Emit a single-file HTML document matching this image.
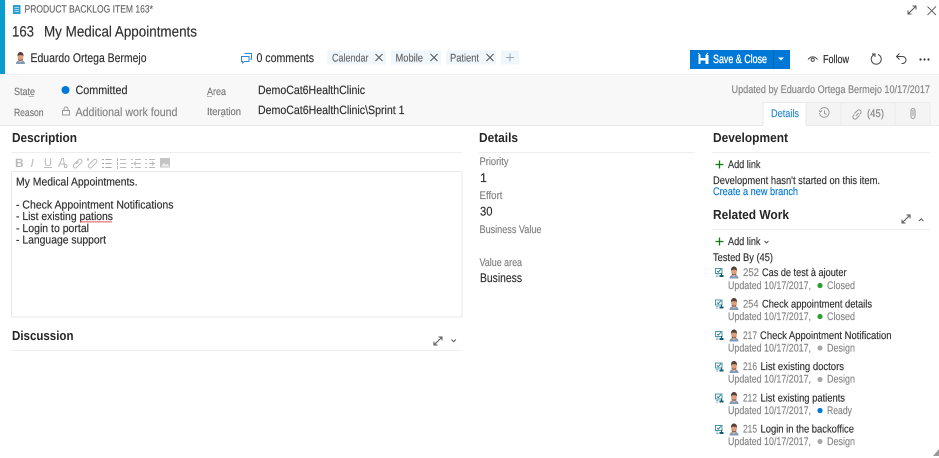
<!DOCTYPE html>
<html><head><meta charset="utf-8"><title>Product Backlog Item 163</title>
<style>
html,body{margin:0;padding:0;background:#fff;width:939px;height:458px;overflow:hidden}
svg{display:block;filter:blur(.3px)}
text{font-family:"Liberation Sans",sans-serif;color:#2e2e2e;fill:currentColor;stroke:currentColor;stroke-width:.16px;font-size:11.5px;text-rendering:geometricPrecision}
.s{font-size:11px}
.m{font-size:12px}
.l{color:#777;font-size:10.500px}
.f{color:#808080;font-size:11px}
.g{color:#858585;font-size:11px}
.t{color:#666;font-size:11px}
.h{font-size:13px;font-weight:bold;color:#262626;stroke-width:0}
.ic{fill:none;stroke:#666;stroke-width:1}
.tb{fill:none;stroke:#bcbcbc;stroke-width:1}
</style></head><body>
<svg width="939" height="458" viewBox="0 0 939 458" xmlns="http://www.w3.org/2000/svg">
<defs>
<g id="av"><path d="M1 12c0-2.600 1.500-3.800 4.500-3.800S10 9.400 10 12z" fill="#7f9bb8"/><path d="M4 8h3v1.500L5.500 10.500 4 9.500z" fill="#e8b89c"/><ellipse cx="5.500" cy="4.700" rx="2.900" ry="3.900" fill="#e09f7c"/><path d="M2.500 4.200C2.300 1.200 4 0 5.500 0S8.700 1.200 8.500 4.200C7.700 2.700 3.300 2.700 2.500 4.200z" fill="#55413a"/><path d="M3.200 6.300c.8 2 3.800 2 4.600 0v1.700c-.9 1-3.700 1-4.600 0z" fill="#8a5f4e"/></g>
<g id="tc"><path d="M.5.500h6.500v5H.5z" fill="none" stroke="#4a98a8"/><path d="M2 3l1.300 1.200L6 1.200" fill="none" stroke="#2f7f90"/><path d="M6 5v2h-1.500v2h4V7H7V5z" fill="#0f5f6f"/><path d="M1 7h2.500M1 8.500h2.500" stroke="#8fbac4"/></g>
<g id="ex" fill="none" stroke="#555" stroke-width="1"><path d="M1 9L9 1M5.500 1H9v3.500M1 5.500V9h3.500"/></g>
</defs>

<!-- header -->
<rect x="0" y="0" width="5" height="74" fill="#0a9ccc"/>
<rect x="13" y="5" width="7.500" height="9" fill="#2a9fd0"/><path d="M14.500 7.500h4.500M14.500 9.500h4.500M14.500 11.500h4.500" stroke="#cfe9f5" stroke-width=".8"/>
<text x="24.500" y="12.500" class="t" style="font-size:10.500px" textLength="128.500" lengthAdjust="spacingAndGlyphs">PRODUCT BACKLOG ITEM 163*</text>
<text x="12" y="36.500" style="font-size:15px" textLength="22" lengthAdjust="spacingAndGlyphs">163</text>
<text x="44" y="36.500" style="font-size:15px" textLength="153" lengthAdjust="spacingAndGlyphs">My Medical Appointments</text>
<g class="ic"><use href="#ex" x="907" y="5"/><path d="M927.500 6.500l8.500 8.500M936 6.500L927.500 15"/></g>

<use href="#av" x="15" y="52"/>
<text x="30.500" y="62" style="font-size:12.500px" textLength="116" lengthAdjust="spacingAndGlyphs">Eduardo Ortega Bermejo</text>
<g fill="none" stroke="#2b88d8"><path d="M244.500 53.500h7v5.500h-1.500"/><path d="M241.500 56.500h7.500v5h-4.500l-2 1.500v-1.500h-1z" fill="#fff"/></g>
<text x="256.500" y="62" style="font-size:12.500px" textLength="57.500" lengthAdjust="spacingAndGlyphs">0 comments</text>

<rect x="327" y="50.500" width="59" height="14" fill="#eff6fc"/>
<text x="332" y="61.500" class="t" textLength="36.500" lengthAdjust="spacingAndGlyphs">Calendar</text>
<path d="M375.500 54l7 7M382.500 54l-7 7" stroke="#555" fill="none"/>
<rect x="391" y="50.500" width="50" height="14" fill="#eff6fc"/>
<text x="395.500" y="61.500" class="t" textLength="27.500" lengthAdjust="spacingAndGlyphs">Mobile</text>
<path d="M430.500 54l7 7M437.500 54l-7 7" stroke="#555" fill="none"/>
<rect x="446" y="50.500" width="50" height="14" fill="#eff6fc"/>
<text x="450" y="61.500" class="t" textLength="29" lengthAdjust="spacingAndGlyphs">Patient</text>
<path d="M486.500 54l7 7M493.500 54l-7 7" stroke="#555" fill="none"/>
<rect x="501" y="50.500" width="18" height="14" fill="#eff6fc"/>
<path d="M506 57.500h8M510 53.500v8" stroke="#9aa7b3" fill="none"/>

<rect x="690" y="50" width="100" height="19" fill="#0078d7"/>
<rect x="773" y="50" width="1" height="19" fill="#0a5fa8"/>
<path d="M698.500 55h10v9h-10z" fill="#fff"/><path d="M700.500 55h5v3h-5z" fill="#0078d7"/><path d="M700.500 60.500h5v3.500h-5z" fill="#0078d7"/><path d="M698 53l2 2M708 53l-2 2" stroke="#fff"/>
<text x="713" y="63" style="font-size:12px;color:#fff;stroke-width:.3px" textLength="54" lengthAdjust="spacingAndGlyphs">Save &amp; Close</text>
<path d="M778 57.500h6l-3 3z" fill="#fff"/>
<path d="M808 59.500c2.500-3.500 7-3.500 9.500 0" fill="none" stroke="#444"/><circle cx="812.700" cy="59.800" r="1.600" fill="none" stroke="#444"/>
<text x="823" y="63" style="color:#333;stroke-width:.25px" textLength="26" lengthAdjust="spacingAndGlyphs">Follow</text>
<g fill="none" stroke="#444" stroke-width="1"><path d="M874.500 54.500a5 5 0 1 0 3.500 0M872 54h3v3"/><path d="M897 56.500h5.500a3.500 3.500 0 0 1 0 7h-1M899.500 53.500l-3 3 3 3"/></g>
<g fill="#333"><circle cx="920.500" cy="59.500" r="1.100"/><circle cx="924.500" cy="59.500" r="1.100"/><circle cx="928.500" cy="59.500" r="1.100"/></g>

<!-- state band -->
<rect x="0" y="74.500" width="939" height="51" fill="#f8f8f8"/>
<rect x="0" y="74" width="939" height="1" fill="#f1f1f1"/>
<rect x="0" y="125" width="939" height="1" fill="#e9e9e9"/>
<text x="14" y="95" class="l" textLength="21" lengthAdjust="spacingAndGlyphs">State</text><path d="M29 96.500h5" stroke="#888" stroke-width=".6"/>
<circle cx="65.500" cy="90" r="4" fill="#0078d7"/>
<text x="75.500" y="94" style="font-size:12px" textLength="52" lengthAdjust="spacingAndGlyphs">Committed</text>
<text x="207" y="95" class="l" textLength="19" lengthAdjust="spacingAndGlyphs">Area</text><path d="M207 96.500h5" stroke="#888" stroke-width=".6"/>
<text x="258" y="94" class="m" textLength="107" lengthAdjust="spacingAndGlyphs">DemoCat6HealthClinic</text>
<text x="731.500" y="93" class="g" textLength="198.500" lengthAdjust="spacingAndGlyphs">Updated by Eduardo Ortega Bermejo 10/17/2017</text>

<text x="14" y="116" class="l" textLength="29.500" lengthAdjust="spacingAndGlyphs">Reason</text>
<g fill="none" stroke="#999"><rect x="62.500" y="110.500" width="7" height="4.500"/><path d="M64 110.500v-1.500a2 2 0 0 1 4 0v1.500"/></g>
<text x="75.500" y="116" class="g" style="font-size:12px" textLength="102" lengthAdjust="spacingAndGlyphs">Additional work found</text>
<text x="207" y="115" class="l" textLength="34" lengthAdjust="spacingAndGlyphs">Iteration</text><path d="M221 116.500h3" stroke="#888" stroke-width=".6"/>
<text x="258" y="114" class="m" textLength="146.500" lengthAdjust="spacingAndGlyphs">DemoCat6HealthClinic\Sprint 1</text>

<!-- tabs -->
<rect x="806" y="102" width="124" height="23" fill="#f4f4f4"/>
<path d="M806 102.500h124M930 102v23M841 102v23M895 102v23" stroke="#eaeaea" fill="none"/>
<rect x="763" y="102" width="43" height="24.500" fill="#fff"/>
<path d="M763 125.500v-23h43v23" stroke="#eaeaea" fill="none"/>
<text x="771" y="117" class="s" style="color:#2b88d8" textLength="28" lengthAdjust="spacingAndGlyphs">Details</text>
<g fill="none" stroke="#999"><path d="M820.500 109.500a4.800 4.800 0 1 1-1 3.500M819 110.500l1.500 1.500 1.500-1.500M824.500 110.500v3l2 1"/></g>
<g fill="none" stroke="#999"><path d="M854.500 113.500l3-3a2.100 2.100 0 0 1 3 3l-1 1M859.500 115.500l-3 3a2.100 2.100 0 0 1-3-3l1-1M856 116l2.500-3"/></g>
<text x="867" y="117" class="g" textLength="17" lengthAdjust="spacingAndGlyphs">(45)</text>
<path d="M911 110.500a2 2 0 0 1 4 0v6a2 2 0 0 1-4 0zM913 110v6" fill="none" stroke="#999"/>

<!-- description -->
<text x="12" y="142" class="h" textLength="65" lengthAdjust="spacingAndGlyphs">Description</text>
<rect x="11" y="152" width="451" height="1" fill="#eee"/>
<text x="15" y="167" style="font-size:12px;color:#bbb;font-weight:bold;stroke-width:0">B</text>
<text x="30.500" y="167" style="font-size:12px;color:#bbb;font-style:italic;stroke-width:0">I</text>
<text x="44" y="166" style="font-size:11px;color:#bbb;stroke-width:0">U</text>
<g class="tb">
<path d="M44 167.500h8"/>
<path d="M58.500 167l3.500-8.500h1.500l1 8.500M60 164h5M64 166c1-2 3-2 3 0s-2 2-3 1"/>
<path d="M73.500 165l5-5a1.900 1.900 0 0 1 3 2.500l-5 5a2 2 0 0 1-3-2.500zM76 164l2.500-2.500"/>
<path d="M88.500 165l5-5a1.900 1.900 0 0 1 3 2.500l-5 5a2 2 0 0 1-3-2.500zM87 158.500l2 2M89 158.500l-2 2"/>
<path d="M105.500 159.500h6M105.500 163.500h6M105.500 167.500h6M102 159.500h2M102 163.500h2M102 167.500h2" stroke="#a8a8a8"/>
<path d="M120 159.500h6M120 163.500h6M120 167.500h6M117.500 158v3M117.500 162v3M117.500 166v3"/>
<path d="M131 159.500h2M131 163.500h2M131 167.500h2M135 159.500h6M135 167.500h6M135 163.500h6M136 161.500l-2 2 2 2"/>
<path d="M145 159.500h2M145 163.500h2M145 167.500h2M149 159.500h6M149 167.500h6M149 163.500h6M152 161.500l2 2-2 2"/>
</g>
<rect x="160" y="158" width="10" height="9.500" fill="#c4c4c4"/><path d="M161 166.500l3-3.500 2 2 1.500-1.500 2 3z" fill="#eee"/>
<rect x="11.500" y="171.500" width="450.500" height="145.500" fill="#fff" stroke="#e8e8e8"/>
<text x="16" y="185.500" textLength="121.500" lengthAdjust="spacingAndGlyphs">My Medical Appointments.</text>
<text x="16" y="208.500" textLength="157.500" lengthAdjust="spacingAndGlyphs">- Check Appointment Notifications</text>
<text x="16" y="220" textLength="97" lengthAdjust="spacingAndGlyphs">- List existing pations</text>
<path d="M80 221.500l1 .8 1-.8 1 .8 1-.8 1 .8 1-.8 1 .8 1-.8 1 .8 1-.8 1 .8 1-.8 1 .8 1-.8 1 .8 1-.8 1 .8 1-.8 1 .8 1-.8 1 .8 1-.8 1 .8 1-.8 1 .8 1-.8 1 .8 1-.8 1 .8 1-.8 1 .8 1-.8" stroke="#e0444c" stroke-width=".7" fill="none"/>
<text x="16" y="232" textLength="73" lengthAdjust="spacingAndGlyphs">- Login to portal</text>
<text x="16" y="243.500" textLength="90" lengthAdjust="spacingAndGlyphs">- Language support</text>

<!-- discussion -->
<text x="12" y="340" class="h" textLength="61.500" lengthAdjust="spacingAndGlyphs">Discussion</text>
<rect x="11" y="350" width="451" height="1" fill="#eee"/>
<use href="#ex" x="433" y="336"/>
<path d="M451.500 339.500l2.200 2.200 2.200-2.200" fill="none" stroke="#555"/>

<!-- details -->
<text x="479" y="142" class="h" textLength="39" lengthAdjust="spacingAndGlyphs">Details</text>
<rect x="479" y="152" width="216" height="1" fill="#eee"/>
<text x="479.500" y="165" class="f" textLength="29" lengthAdjust="spacingAndGlyphs">Priority</text>
<text x="480" y="182" style="font-size:12.500px">1</text>
<text x="479.500" y="199" class="f" textLength="23" lengthAdjust="spacingAndGlyphs">Effort</text>
<text x="480" y="215.500" style="font-size:12.500px" textLength="12.500" lengthAdjust="spacingAndGlyphs">30</text>
<text x="479.500" y="233" class="f" textLength="62" lengthAdjust="spacingAndGlyphs">Business Value</text>
<text x="479.500" y="266" class="f" textLength="42.500" lengthAdjust="spacingAndGlyphs">Value area</text>
<text x="480" y="282" style="font-size:12.500px" textLength="42" lengthAdjust="spacingAndGlyphs">Business</text>

<!-- development -->
<text x="713" y="142" class="h" textLength="75" lengthAdjust="spacingAndGlyphs">Development</text>
<rect x="712" y="152" width="218" height="1" fill="#eee"/>
<path d="M715.500 164.500h8M719.500 160.500v8" stroke="#107c10" stroke-width="1.300"/>
<text x="728" y="168" class="s" textLength="32.500" lengthAdjust="spacingAndGlyphs">Add link</text>
<text x="713" y="184" class="s" textLength="167" lengthAdjust="spacingAndGlyphs">Development hasn't started on this item.</text>
<text x="713" y="195" class="s" style="color:#0078d7" textLength="85" lengthAdjust="spacingAndGlyphs">Create a new branch</text>

<text x="713" y="219" class="h" textLength="76" lengthAdjust="spacingAndGlyphs">Related Work</text>
<rect x="712" y="229" width="218" height="1" fill="#eee"/>
<use href="#ex" x="901" y="214"/>
<path d="M919 221l2.200-2.200 2.200 2.200" fill="none" stroke="#555"/>
<path d="M715.500 241.500h8M719.500 237.500v8" stroke="#107c10" stroke-width="1.300"/>
<text x="728" y="245" class="s" textLength="32.500" lengthAdjust="spacingAndGlyphs">Add link</text>
<path d="M764.500 241l2 2 2-2" fill="none" stroke="#555"/>
<text x="713" y="261" class="s" textLength="60" lengthAdjust="spacingAndGlyphs">Tested By (45)</text>

<!-- linked items -->
<use href="#tc" x="715" y="268"/><use href="#av" x="728.500" y="266.500"/>
<text x="743" y="276" class="g" textLength="16" lengthAdjust="spacingAndGlyphs">252</text>
<text x="762" y="276" class="s" textLength="84.500" lengthAdjust="spacingAndGlyphs">Cas de test à ajouter</text>
<text x="728" y="289" class="g" textLength="83" lengthAdjust="spacingAndGlyphs">Updated 10/17/2017,</text>
<circle cx="820" cy="285.500" r="2.600" fill="#2ba02b"/>
<text x="827" y="289" class="g" textLength="28" lengthAdjust="spacingAndGlyphs">Closed</text>

<use href="#tc" x="715" y="299.500"/><use href="#av" x="728.500" y="298"/>
<text x="743" y="307.500" class="g" textLength="15.500" lengthAdjust="spacingAndGlyphs">254</text>
<text x="762" y="307.500" class="s" textLength="110" lengthAdjust="spacingAndGlyphs">Check appointment details</text>
<text x="728" y="320" class="g" textLength="83" lengthAdjust="spacingAndGlyphs">Updated 10/17/2017,</text>
<circle cx="820" cy="316.500" r="2.600" fill="#2ba02b"/>
<text x="827" y="320" class="g" textLength="28" lengthAdjust="spacingAndGlyphs">Closed</text>

<use href="#tc" x="715" y="331"/><use href="#av" x="728.500" y="329.500"/>
<text x="743" y="339" class="g" textLength="14" lengthAdjust="spacingAndGlyphs">217</text>
<text x="760" y="339" class="s" textLength="131.500" lengthAdjust="spacingAndGlyphs">Check Appointment Notification</text>
<text x="728" y="351.500" class="g" textLength="83" lengthAdjust="spacingAndGlyphs">Updated 10/17/2017,</text>
<circle cx="820" cy="348" r="2.600" fill="#aaa"/>
<text x="827" y="351.500" class="g" textLength="28" lengthAdjust="spacingAndGlyphs">Design</text>

<use href="#tc" x="715" y="362.500"/><use href="#av" x="728.500" y="361"/>
<text x="743" y="370" class="g" textLength="14" lengthAdjust="spacingAndGlyphs">216</text>
<text x="760.500" y="370" class="s" textLength="83.500" lengthAdjust="spacingAndGlyphs">List existing doctors</text>
<text x="728" y="382.500" class="g" textLength="83" lengthAdjust="spacingAndGlyphs">Updated 10/17/2017,</text>
<circle cx="820" cy="379.500" r="2.600" fill="#aaa"/>
<text x="827" y="382.500" class="g" textLength="28" lengthAdjust="spacingAndGlyphs">Design</text>

<use href="#tc" x="715" y="393.500"/><use href="#av" x="728.500" y="392"/>
<text x="743" y="401.500" class="g" textLength="14" lengthAdjust="spacingAndGlyphs">212</text>
<text x="760.500" y="401.500" class="s" textLength="84.500" lengthAdjust="spacingAndGlyphs">List existing patients</text>
<text x="728" y="414" class="g" textLength="83" lengthAdjust="spacingAndGlyphs">Updated 10/17/2017,</text>
<circle cx="820" cy="410.500" r="2.600" fill="#0078d7"/>
<text x="827" y="414" class="g" textLength="25" lengthAdjust="spacingAndGlyphs">Ready</text>

<use href="#tc" x="715" y="425"/><use href="#av" x="728.500" y="423.500"/>
<text x="743" y="432.500" class="g" textLength="14" lengthAdjust="spacingAndGlyphs">215</text>
<text x="760.500" y="432.500" class="s" textLength="93.500" lengthAdjust="spacingAndGlyphs">Login in the backoffice</text>
<text x="728" y="445" class="g" textLength="83" lengthAdjust="spacingAndGlyphs">Updated 10/17/2017,</text>
<circle cx="820" cy="441.500" r="2.600" fill="#aaa"/>
<text x="827" y="445" class="g" textLength="28" lengthAdjust="spacingAndGlyphs">Design</text>

<path d="M939 449v7h-6z" fill="#999"/>
</svg>
</body></html>
